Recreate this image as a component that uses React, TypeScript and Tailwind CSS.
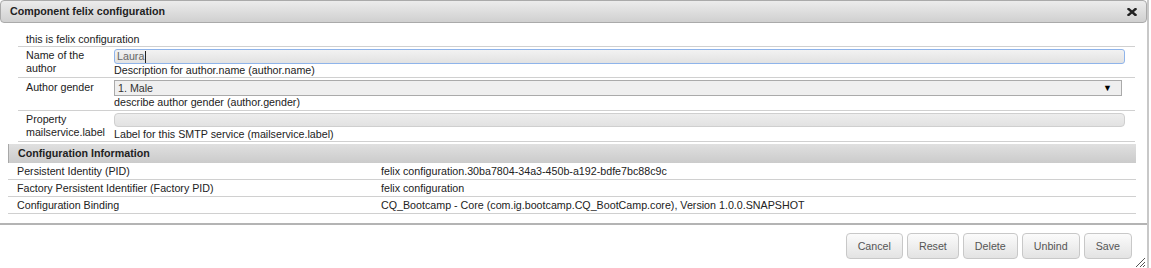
const rows = [
  { label: "Persistent Identity (PID)", value: "felix configuration.30ba7804-34a3-450b-a192-bdfe7bc88c9c" },
  { label: "Factory Persistent Identifier (Factory PID)", value: "felix configuration" },
  {
    label: "Configuration Binding",
    value: "CQ_Bootcamp - Core (com.ig.bootcamp.CQ_BootCamp.core), Version 1.0.0.SNAPSHOT",
  },
];

const buttons = ["Cancel", "Reset", "Delete", "Unbind", "Save"];

const CloseIcon = () => (
  <svg width="10" height="8" viewBox="0 0 10 8" aria-hidden="true">
    <path d="M1.5 1 L8.5 7 M8.5 1 L1.5 7" stroke="#222" strokeWidth="2.4" strokeLinecap="square" />
  </svg>
);

const ResizeGrip = () => (
  <svg width="12" height="12" viewBox="0 0 12 12" aria-hidden="true">
    <path d="M11 2 L2 11 M11 6 L6 11 M11 9 L9 11" stroke="#555" strokeWidth="1" />
  </svg>
);

export default function App() {
  return (
    <div className="flex h-[268px] w-[1151px] bg-white font-['Liberation_Sans',Arial,sans-serif] text-[10.7px] text-[#222]">
      <div className="relative flex w-[1147px] flex-col">
        {/* title bar */}
        <div className="flex h-[23px] items-center justify-between rounded-[4px] border border-[#aaa] bg-linear-to-b from-[#ececec] to-[#d0d0d0] pl-[9px] pr-[9px]">
          <span className="font-bold">Component felix configuration</span>
          <CloseIcon />
        </div>

        {/* form */}
        <div className="ml-[18px] mt-[8px] w-[1117px] leading-[13px]">
          <div className="h-[16px] border-b border-[#d0d0d0] pl-[8px] pt-[2px]">this is felix configuration</div>

          <div className="flex border-b border-[#d0d0d0] pt-[2px]">
            <div className="w-[96px] pl-[8px]">
              Name of the
              <br />
              author
            </div>
            <div className="w-[1011px]">
              <div className="flex h-[15px] items-center rounded-[3px] border border-[#8fb4ea] bg-linear-to-b from-[#f2f2f2] to-[#e2e2e2] pl-[2px] text-[#666]">
                Laura<span className="ml-px inline-block h-[12px] w-px bg-[#222]" />
              </div>
              <div>Description for author.name (author.name)</div>
            </div>
          </div>

          <div className="flex border-b border-[#d0d0d0] pb-px pt-[2px]">
            <div className="w-[96px] pl-[8px] pt-px">Author gender</div>
            <div className="w-[1011px]">
              <div className="flex h-[16px] w-[1008px] items-center justify-between border border-[#aaa] bg-[#efefef] pl-[3px] pr-[9px] text-[#333]">
                <span>1. Male</span>
                <span className="text-[9px] text-black">▼</span>
              </div>
              <div>describe author gender (author.gender)</div>
            </div>
          </div>

          <div className="flex border-b border-[#d0d0d0] pt-[2px]">
            <div className="w-[96px] pl-[8px]">
              Property
              <br />
              mailservice.label
            </div>
            <div className="w-[1011px]">
              <div className="h-[14px] rounded-[4px] border border-[#cfcfcf] bg-linear-to-b from-[#ededed] to-[#e2e2e2]" />
              <div className="pt-px">Label for this SMTP service (mailservice.label)</div>
            </div>
          </div>
        </div>

        {/* configuration information */}
        <div className="ml-[8px] mt-[2px] w-[1128px]">
          <div className="flex h-[19px] items-center border-l border-[#a8a8a8] bg-linear-to-b from-[#e0e0e0] to-[#cbcbcb] pl-[9px] font-bold">
            Configuration Information
          </div>
          {rows.map((r) => (
            <div key={r.label} className="flex h-[17px] items-center border-b border-[#d0d0d0]">
              <div className="w-[373px] pl-[9px]">{r.label}</div>
              <div>{r.value}</div>
            </div>
          ))}
        </div>

        <div className="mt-[9px] h-[2px] bg-[#b4b4b4]" />

        {/* buttons */}
        <div className="flex justify-end gap-[4px] pr-[15px] pt-[8px]">
          {buttons.map((b) => (
            <button
              key={b}
              className="h-[26px] rounded-[4px] border border-[#c8c8c8] bg-linear-to-b from-[#fbfbfb] to-[#e3e3e3] px-[11px] text-[#555]"
            >
              {b}
            </button>
          ))}
        </div>

        <div className="absolute bottom-0 right-[1px]">
          <ResizeGrip />
        </div>
      </div>
      <div className="h-full w-[2px] bg-[#c8c8c8]" />
    </div>
  );
}
